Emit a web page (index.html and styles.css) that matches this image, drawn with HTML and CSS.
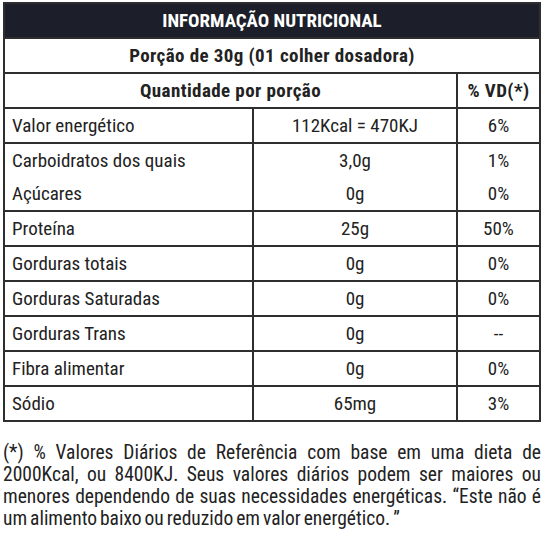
FILE: index.html
```html
<!DOCTYPE html>
<html lang="pt-BR">
<head>
    <meta charset="UTF-8">
    <meta name="viewport" content="width=device-width, initial-scale=1.0">
    <title>Informação Nutricional</title>
    <link rel="stylesheet" href="styles.css">
</head>
<body>
    <table class="tabela">
        <tr class="titulo">
            <th colspan="3">INFORMAÇÃO NUTRICIONAL</th>
        </tr>
        <tr class="porcao">
            <th colspan="3">Porção de 30g (01 colher dosadora)</th>
        </tr>
        <tr class="cabecalho">
            <th colspan="2">Quantidade por porção</th>
            <th>% VD(*)</th>
        </tr>
        <tr>
            <td class="nome">Valor energético</td>
            <td class="qtd">112Kcal = 470KJ</td>
            <td class="vd">6%</td>
        </tr>
        <tr class="sem-linha">
            <td class="nome">Carboidratos dos quais</td>
            <td class="qtd">3,0g</td>
            <td class="vd">1%</td>
        </tr>
        <tr>
            <td class="nome">Açúcares</td>
            <td class="qtd">0g</td>
            <td class="vd">0%</td>
        </tr>
        <tr>
            <td class="nome">Proteína</td>
            <td class="qtd">25g</td>
            <td class="vd">50%</td>
        </tr>
        <tr>
            <td class="nome">Gorduras totais</td>
            <td class="qtd">0g</td>
            <td class="vd">0%</td>
        </tr>
        <tr>
            <td class="nome">Gorduras Saturadas</td>
            <td class="qtd">0g</td>
            <td class="vd">0%</td>
        </tr>
        <tr>
            <td class="nome">Gorduras Trans</td>
            <td class="qtd">0g</td>
            <td class="vd">--</td>
        </tr>
        <tr>
            <td class="nome">Fibra alimentar</td>
            <td class="qtd">0g</td>
            <td class="vd">0%</td>
        </tr>
        <tr>
            <td class="nome">Sódio</td>
            <td class="qtd">65mg</td>
            <td class="vd">3%</td>
        </tr>
    </table>

    <p class="nota">
        <span class="linha">(*) % Valores Diários de Referência com base em uma dieta de</span>
        <span class="linha">2000Kcal, ou 8400KJ. Seus valores diários podem ser maiores ou</span>
        <span class="linha">menores dependendo de suas necessidades energéticas. “Este não é</span>
        <span class="ultima">um alimento baixo ou reduzido em valor energético. ”</span>
    </p>
</body>
</html>
```

FILE: styles.css
```css
body {
    font-family: "Roboto Condensed", Roboto, sans-serif;
    font-stretch: condensed;
    color: #222;
    background-color: #fff;
    margin: 2px 3px;
}

.tabela {
    width: 538px;
    border-collapse: collapse;
    border: 2px solid #2e2e2e;
    font-size: 19px;
}

.tabela th,
.tabela td {
    height: 33px;
    padding: 0 8px;
    border: 2px solid #2e2e2e;
    line-height: 20px;
    white-space: nowrap;
}

.titulo th {
    background-color: #1c1f29;
    color: #fff;
    font-weight: bold;
    text-align: center;
}

.porcao th,
.cabecalho th {
    font-weight: bold;
    text-align: center;
    letter-spacing: 0.4px;
}

.nome {
    width: 232px;
    padding-left: 7px !important;
    text-align: left;
}

.qtd {
    width: 186px;
    text-align: center;
}

.vd {
    text-align: center;
}

.sem-linha td {
    border-bottom: none;
}

.sem-linha + tr td {
    border-top: none;
}

.nota {
    margin: 20px 0 0 0;
    font-size: 19.5px;
    line-height: 22px;
    word-spacing: -1.5px;
}

.nota .linha {
    display: block;
    white-space: nowrap;
    text-align: justify;
    text-align-last: justify;
}

.nota .ultima {
    display: block;
}
```
